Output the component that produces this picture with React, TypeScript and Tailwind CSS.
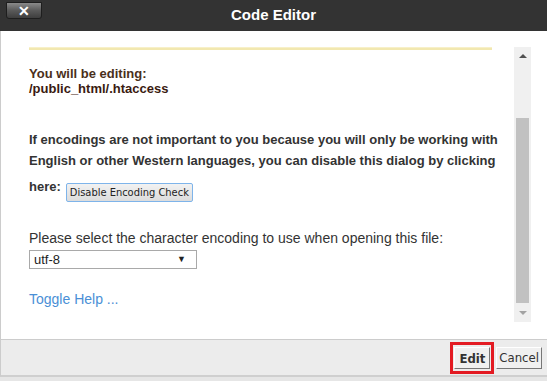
import React from "react";

export default function App() {
  const f = { fontFamily: '"Liberation Sans", Arial, sans-serif' };
  const tah = { fontFamily: '"DejaVu Sans Condensed", "DejaVu Sans", Tahoma, sans-serif' };
  return (
    <div className="w-[547px] h-[381px] overflow-hidden bg-[#e6e6e6] flex flex-col" style={f}>
      <div className="h-[31px] bg-[#333333] relative flex items-center justify-center shrink-0">
        <div className="absolute left-[6px] top-[2px] w-[36px] h-[17px] rounded-b-[3px] border border-[#1e1e1e] bg-gradient-to-b from-[#8a8a8a] via-[#5a5a5a] to-[#3e3e3e] flex items-center justify-center text-white font-bold text-[14px] leading-none">
          ✕
        </div>
        <span className="text-white font-bold text-[15px]">Code Editor</span>
      </div>
      <div className="h-[308px] bg-white border-l border-[#cccccc] flex shrink-0">
        <div className="w-[513px] shrink-0 pl-[28px] pt-[16px]">
          <div className="w-[463px] h-[3px] bg-[#f2e8b0] border-t border-[#f7f0c9]" />
          <div className="mt-[16px] text-[13px] font-bold text-[#333] leading-[15px]">
            <div className="text-[#4a2f1a]">You will be editing:</div>
            <div className="text-[#3a1a10]">/public_html/.htaccess</div>
          </div>
          <div className="mt-[33px] w-[478px] text-[13px] font-bold text-[#333] leading-[21px]">
            If encodings are not important to you because you will only be working with English or other Western languages, you can disable this dialog by clicking
          </div>
          <div className="mt-[8px] flex items-start text-[13px] font-bold text-[#333]">
            <span className="leading-[16px]">here:</span>
            <button className="ml-[5px] mt-[4px] h-[19px] px-[3px] text-[11px] text-[#222] bg-gradient-to-b from-[#f2f2f2] to-[#dcdcdc] border border-[#7eb4ea] rounded-[2px] font-normal leading-none" style={tah}>
              Disable Encoding Check
            </button>
          </div>
          <div className="mt-[28px] text-[14px] text-[#333] leading-[16px]">
            Please select the character encoding to use when opening this file:
          </div>
          <div className="mt-[4px] w-[168px] h-[19px] border border-[#a9a9a9] flex items-center justify-between px-[4px] text-[13px] text-[#222]">
            <span>utf-8</span>
            <span className="text-[9px] mr-[6px]">▼</span>
          </div>
          <div className="mt-[20px] text-[14px] text-[#4a8fd6]">Toggle Help ...</div>
        </div>
        <div className="w-[17px] mt-[16px] h-[275px] bg-[#f0f0f0] flex flex-col items-center shrink-0">
          <div className="h-[17px] flex items-center justify-center">
            <div className="w-0 h-0 border-l-[4px] border-r-[4px] border-b-[4px] border-l-transparent border-r-transparent border-b-[#505050]" />
          </div>
          <div className="mt-[54px] w-[13px] h-[185px] bg-[#c1c1c1]" />
          <div className="flex-1 flex items-center justify-center">
            <div className="w-0 h-0 border-l-[4px] border-r-[4px] border-t-[4px] border-l-transparent border-r-transparent border-t-[#a3a3a3]" />
          </div>
        </div>
      </div>
      <div className="h-[38px] bg-[#ececec] border-t border-[#cccccc] border-b-2 border-b-[#cfcfcf] border-l border-l-[#cccccc] flex items-center justify-end pr-[5px] shrink-0">
        <div className="border-[3px] border-[#e31b23] p-[1px] mr-[2px]">
          <button className="h-[22px] px-[4px] text-[13px] font-bold text-[#333] bg-[#f0f0f0] border border-t-white border-l-white border-r-[#777] border-b-[#777]" style={tah}>Edit</button>
        </div>
        <button className="h-[22px] px-[2px] text-[13px] text-[#333] bg-[#f0f0f0] border border-t-white border-l-white border-r-[#777] border-b-[#777]" style={tah}>Cancel</button>
      </div>
    </div>
  );
}
